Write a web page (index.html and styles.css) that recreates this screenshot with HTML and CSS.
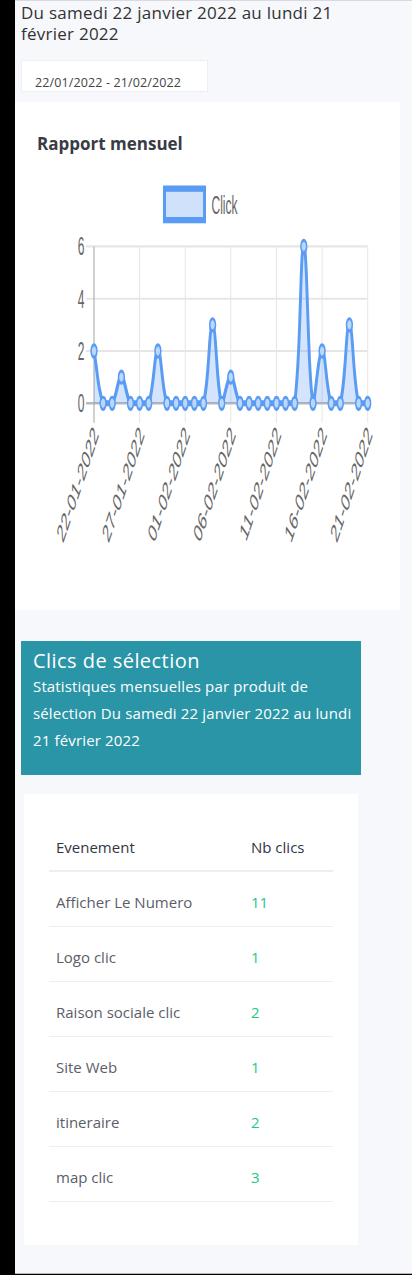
FILE: index.html
```html
<!DOCTYPE html>
<html lang="fr">
<head>
<meta charset="utf-8">
<title>Rapport mensuel</title>
<link rel="stylesheet" href="styles.css">
</head>
<body>
<div class="shell">
  <aside class="rail"></aside>
  <main class="main">
    <h1 class="period">Du samedi 22 janvier 2022 au lundi 21 février 2022</h1>
    <div class="range">22/01/2022 - 21/02/2022</div>

    <section class="chart-card">
      <h2 class="chart-title">Rapport mensuel</h2>
      <svg class="chart" viewBox="15 175 385 390" width="385" height="390" xmlns="http://www.w3.org/2000/svg">
        <g transform="matrix(1 0 0 2.1 0 175)">
          <rect x="164.5" y="6.5" width="40" height="15" fill="#cfe1fb" stroke="#5a9cf3" stroke-width="3"/>
          <text class="lbl" x="211.5" y="18.6">Click</text>

          <g class="grid">
            <line x1="86" y1="34.01" x2="367.7" y2="34.01"/>
            <line x1="86" y1="58.91" x2="367.7" y2="58.91"/>
            <line x1="86" y1="83.81" x2="367.7" y2="83.81"/>
            <line x1="139.6" y1="34.01" x2="139.6" y2="118"/>
            <line x1="185.2" y1="34.01" x2="185.2" y2="118"/>
            <line x1="230.8" y1="34.01" x2="230.8" y2="118"/>
            <line x1="276.5" y1="34.01" x2="276.5" y2="118"/>
            <line x1="322.1" y1="34.01" x2="322.1" y2="118"/>
            <line x1="367.7" y1="34.01" x2="367.7" y2="118"/>
          </g>
          <line class="zero" x1="86" y1="108.71" x2="367.7" y2="108.71"/>
          <line class="axis" x1="94" y1="34.01" x2="94" y2="118"/>

          <path class="area" d="M94,83.81 C97.65,93.77 97.67,101.3 103.1,108.71 L112.2,108.71 C116.79,105.58 117.75,96.26 121.4,96.26 C125.05,96.26 125.91,105.58 130.5,108.71 L148.7,108.71 C154.13,101.3 154.25,83.81 157.9,83.81 C161.55,83.81 161.57,101.3 167.0,108.71 L203.5,108.71 C209.4,96.63 208.95,71.36 212.6,71.36 C216.25,71.36 216.5,101.6 221.7,108.71 C223.8,108.71 227.15,96.26 230.8,96.26 C234.45,96.26 235.41,105.58 240.0,108.71 L294.7,108.71 C301.21,82.06 300.15,34.01 303.8,34.01 C307.45,34.01 307.6,93.98 313.0,108.71 C314.9,108.71 318.45,83.81 322.1,83.81 C325.75,83.81 325.77,101.3 331.2,108.71 L340.3,108.71 C346.2,96.63 345.75,71.36 349.4,71.36 C353.05,71.36 352.7,96.63 358.6,108.71 L367.7,108.71 L94,108.71 Z"/>
          <path class="line" d="M94,83.81 C97.65,93.77 97.67,101.3 103.1,108.71 L112.2,108.71 C116.79,105.58 117.75,96.26 121.4,96.26 C125.05,96.26 125.91,105.58 130.5,108.71 L148.7,108.71 C154.13,101.3 154.25,83.81 157.9,83.81 C161.55,83.81 161.57,101.3 167.0,108.71 L203.5,108.71 C209.4,96.63 208.95,71.36 212.6,71.36 C216.25,71.36 216.5,101.6 221.7,108.71 C223.8,108.71 227.15,96.26 230.8,96.26 C234.45,96.26 235.41,105.58 240.0,108.71 L294.7,108.71 C301.21,82.06 300.15,34.01 303.8,34.01 C307.45,34.01 307.6,93.98 313.0,108.71 C314.9,108.71 318.45,83.81 322.1,83.81 C325.75,83.81 325.77,101.3 331.2,108.71 L340.3,108.71 C346.2,96.63 345.75,71.36 349.4,71.36 C353.05,71.36 352.7,96.63 358.6,108.71 L367.7,108.71"/>

          <g class="pts">
            <circle cx="94" cy="83.81" r="2.9"/>
            <circle cx="103.1" cy="108.71" r="2.9"/>
            <circle cx="112.2" cy="108.71" r="2.9"/>
            <circle cx="121.4" cy="96.26" r="2.9"/>
            <circle cx="130.5" cy="108.71" r="2.9"/>
            <circle cx="139.6" cy="108.71" r="2.9"/>
            <circle cx="148.7" cy="108.71" r="2.9"/>
            <circle cx="157.9" cy="83.81" r="2.9"/>
            <circle cx="167.0" cy="108.71" r="2.9"/>
            <circle cx="176.1" cy="108.71" r="2.9"/>
            <circle cx="185.2" cy="108.71" r="2.9"/>
            <circle cx="194.4" cy="108.71" r="2.9"/>
            <circle cx="203.5" cy="108.71" r="2.9"/>
            <circle cx="212.6" cy="71.36" r="2.9"/>
            <circle cx="221.7" cy="108.71" r="2.9"/>
            <circle cx="230.8" cy="96.26" r="2.9"/>
            <circle cx="240.0" cy="108.71" r="2.9"/>
            <circle cx="249.1" cy="108.71" r="2.9"/>
            <circle cx="258.2" cy="108.71" r="2.9"/>
            <circle cx="267.3" cy="108.71" r="2.9"/>
            <circle cx="276.5" cy="108.71" r="2.9"/>
            <circle cx="285.6" cy="108.71" r="2.9"/>
            <circle cx="294.7" cy="108.71" r="2.9"/>
            <circle cx="303.8" cy="34.01" r="2.9"/>
            <circle cx="313.0" cy="108.71" r="2.9"/>
            <circle cx="322.1" cy="83.81" r="2.9"/>
            <circle cx="331.2" cy="108.71" r="2.9"/>
            <circle cx="340.3" cy="108.71" r="2.9"/>
            <circle cx="349.4" cy="71.36" r="2.9"/>
            <circle cx="358.6" cy="108.71" r="2.9"/>
            <circle cx="367.7" cy="108.71" r="2.9"/>
          </g>

          <g class="lbl" text-anchor="end">
            <text x="84.5" y="38.3">6</text>
            <text x="84.5" y="63.2">4</text>
            <text x="84.5" y="88.1">2</text>
            <text x="84.5" y="113">0</text>
          </g>
          <g class="lbl xl" text-anchor="end">
            <text transform="translate(96 121.5) rotate(-55)" dy="4">22-01-2022</text>
            <text transform="translate(141.6 121.5) rotate(-55)" dy="4">27-01-2022</text>
            <text transform="translate(187.2 121.5) rotate(-55)" dy="4">01-02-2022</text>
            <text transform="translate(232.8 121.5) rotate(-55)" dy="4">06-02-2022</text>
            <text transform="translate(278.5 121.5) rotate(-55)" dy="4">11-02-2022</text>
            <text transform="translate(324.1 121.5) rotate(-55)" dy="4">16-02-2022</text>
            <text transform="translate(369.7 121.5) rotate(-55)" dy="4">21-02-2022</text>
          </g>
        </g>
      </svg>
    </section>

    <section class="banner">
      <h3 class="banner-title">Clics de sélection</h3>
      <p class="banner-text">Statistiques mensuelles par produit de sélection Du samedi 22 janvier 2022 au lundi 21 février 2022</p>
    </section>

    <section class="table-card">
      <table class="stats">
        <thead>
          <tr><th class="c1">Evenement</th><th>Nb clics</th></tr>
        </thead>
        <tbody>
          <tr><td>Afficher Le Numero</td><td class="num">11</td></tr>
          <tr><td>Logo clic</td><td class="num">1</td></tr>
          <tr><td>Raison sociale clic</td><td class="num">2</td></tr>
          <tr><td>Site Web</td><td class="num">1</td></tr>
          <tr><td>itineraire</td><td class="num">2</td></tr>
          <tr><td>map clic</td><td class="num">3</td></tr>
        </tbody>
      </table>
    </section>
  </main>
</div>
</body>
</html>
```

FILE: styles.css
```css
html, body {
  margin: 0;
  padding: 0;
  background: #000;
}

body {
  font-family: "Open Sans", "Noto Sans", sans-serif;
  color: #333;
}

.shell {
  display: flex;
}

.rail {
  width: 15px;
  flex: none;
  background: #000;
}

.main {
  flex: 1;
  height: 1272px;
  background: #f7f8fc;
  border-top: 1px solid #d9dadf;
  border-bottom: 1px solid #b5b5b8;
}

.period {
  margin: 0 0 0 6px;
  padding-top: 1px;
  max-width: 340px;
  font-size: 17px;
  letter-spacing: 0.25px;
  line-height: 21px;
  font-weight: 400;
  color: #333;
}

.range {
  margin: 16px 0 0 6px;
  width: 187px;
  height: 32px;
  box-sizing: border-box;
  background: #fff;
  border: 1px solid #eeeff3;
  padding: 14px 0 0 13px;
  font-size: 12.5px;
  letter-spacing: 0.12px;
  line-height: 15px;
  color: #444;
}

.chart-card {
  margin-top: 10px;
  width: 385px;
  height: 508px;
  box-sizing: border-box;
  background: #fff;
  padding-top: 30px;
}

.chart-title {
  margin: 0;
  padding-left: 22px;
  font-size: 17px;
  line-height: 23px;
  font-weight: 700;
  color: #3a3b45;
}

.chart {
  display: block;
  margin-top: 20px;
}

.chart .lbl,
.chart .lbl text {
  font-family: "Liberation Sans", Arial, sans-serif;
  font-size: 12px;
  fill: #666;
}

.chart .xl text {
  font-size: 12.4px;
}

.chart .grid line {
  stroke: #e6e6e6;
  stroke-width: 1;
}

.chart .zero {
  stroke: #b9b9b9;
  stroke-width: 1.2;
}

.chart .axis {
  stroke: #a3a3a3;
  stroke-width: 1;
}

.chart .area {
  fill: rgba(84, 152, 242, 0.26);
  stroke: none;
}

.chart .line {
  fill: none;
  stroke: #5a9cf3;
  stroke-width: 2.9;
  stroke-linejoin: round;
}

.chart .pts circle {
  fill: #bcd7fa;
  stroke: #5a9cf3;
  stroke-width: 1.5;
}

.banner {
  margin: 31px 0 0 6px;
  width: 340px;
  box-sizing: border-box;
  padding: 8px 6px 21px 12px;
  background: #2a95a7;
  color: #fff;
}

.banner-title {
  margin: 0;
  font-size: 20px;
  letter-spacing: 0.45px;
  line-height: 24px;
  font-weight: 400;
}

.banner-text {
  margin: 0;
  font-size: 15px;
  letter-spacing: 0.15px;
  line-height: 27px;
}

.table-card {
  margin: 19px 0 0 9px;
  width: 334px;
  box-sizing: border-box;
  padding: 23px 25px 43px;
  background: #fff;
}

.stats {
  width: 100%;
  border-collapse: collapse;
  font-size: 15px;
  line-height: 18px;
}

.stats th {
  text-align: left;
  font-weight: 500;
  color: #33363f;
  padding: 21px 7px 14px;
  border-bottom: 2px solid #eceef3;
}

.stats th.c1 {
  width: 181px;
}

.stats td {
  color: #5a5e69;
  padding: 21px 7px 15px;
  border-bottom: 1px solid #eceef3;
}

.stats td.num {
  color: #1cc88a;
}
```
